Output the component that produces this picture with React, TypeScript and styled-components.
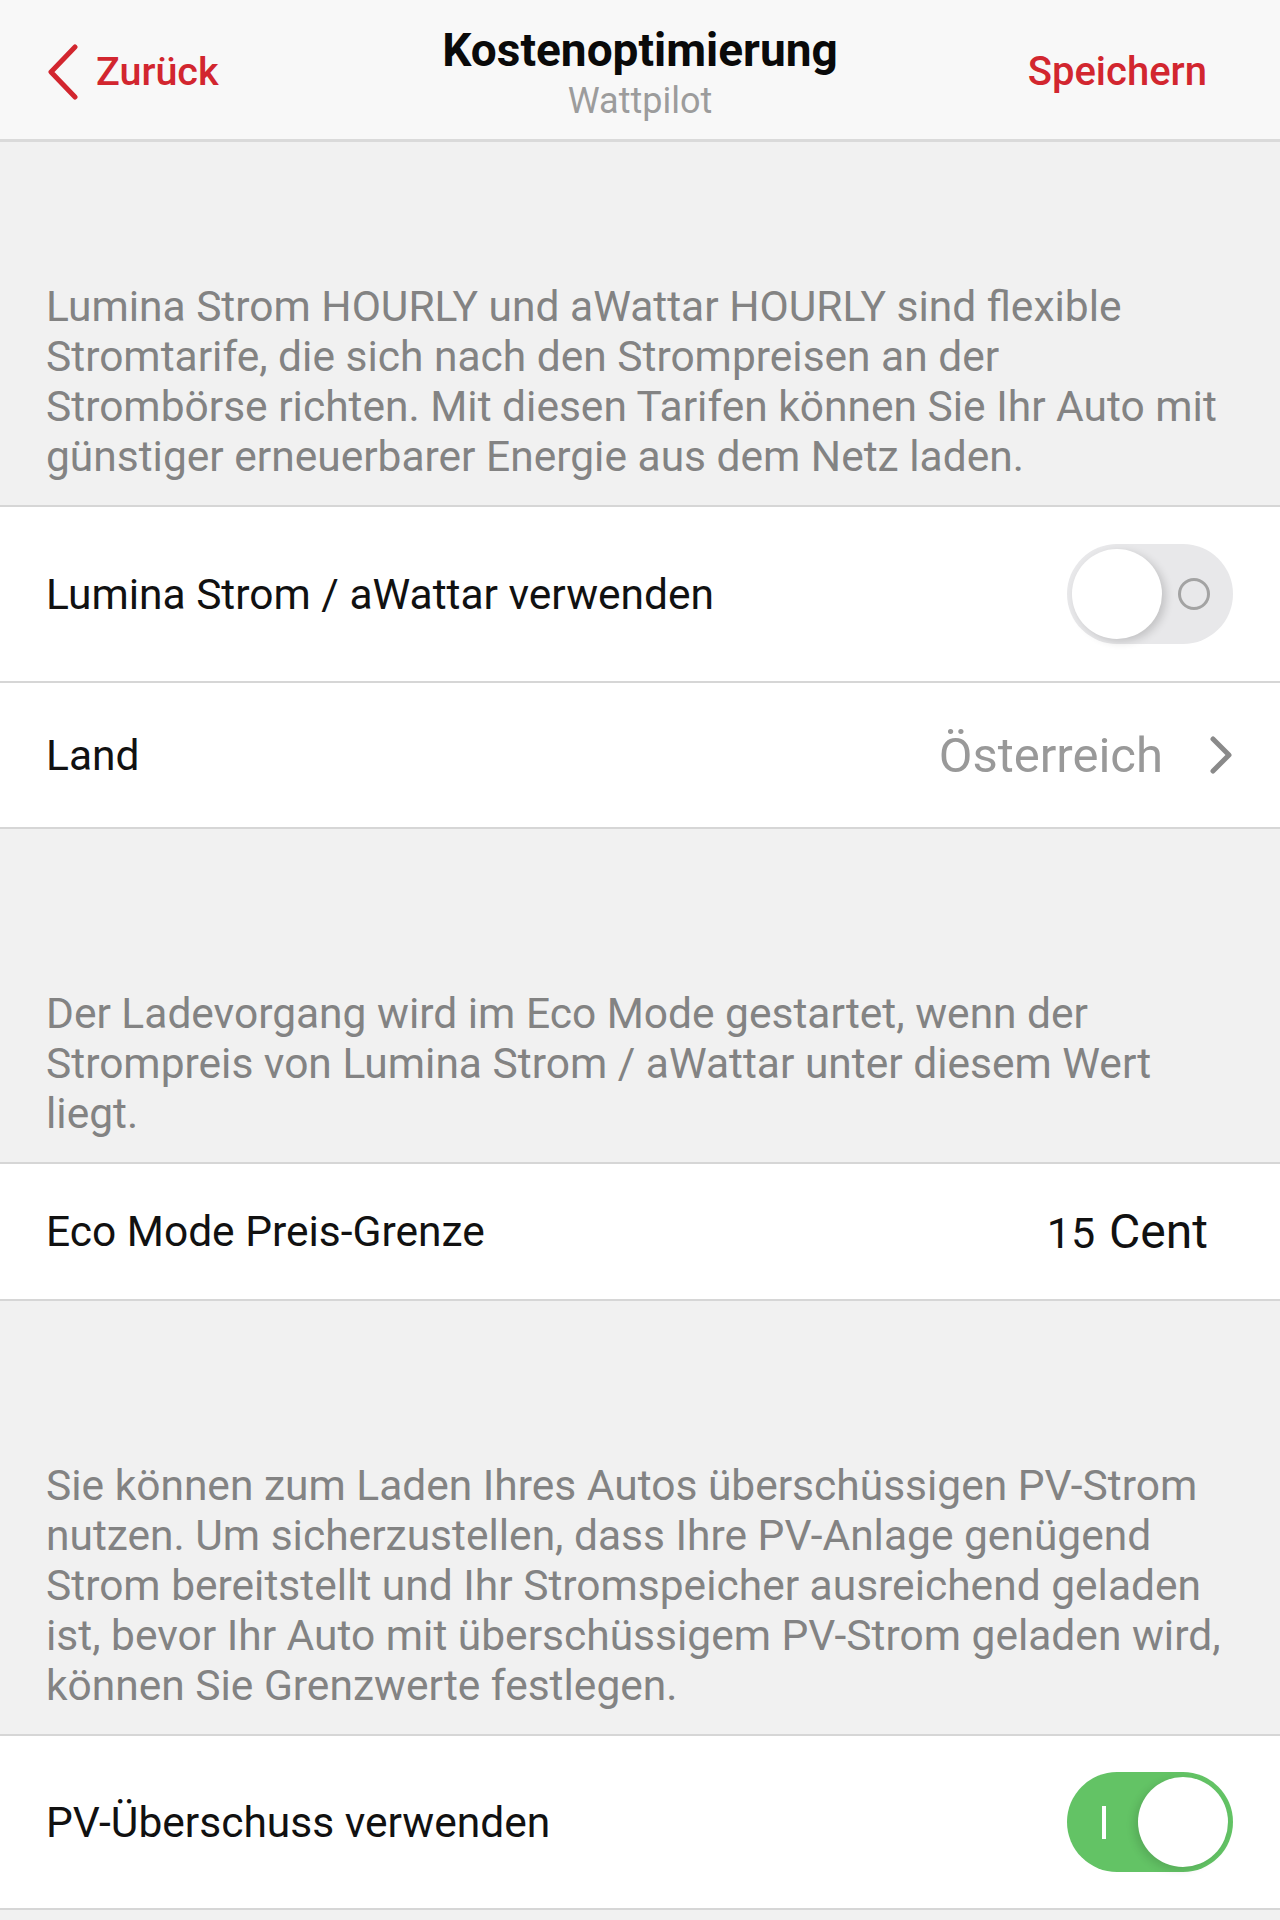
import React from "react";
import styled, { createGlobalStyle } from "styled-components";

const GlobalStyle = createGlobalStyle`
  html, body {
    margin: 0;
    padding: 0;
    background: #f1f1f1;
    font-family: Roboto, "Noto Sans", "Liberation Sans", sans-serif;
    -webkit-font-smoothing: antialiased;
  }
  * { box-sizing: border-box; }
`;

const Page = styled.div`
  width: 1280px;
  min-height: 1920px;
  background: #f1f1f1;
  display: flex;
  flex-direction: column;
`;

const Header = styled.header`
  height: 142px;
  background: #f8f8f8;
  border-bottom: 3px solid #dadada;
  display: grid;
  grid-template-columns: 1fr auto 1fr;
  align-items: center;
  padding: 0 47px;
`;

const BackButton = styled.button`
  justify-self: start;
  display: flex;
  align-items: center;
  gap: 17px;
  border: none;
  background: transparent;
  padding: 0;
  margin-top: 4px;
  color: #d2262f;
  font-family: Roboto, sans-serif;
  font-size: 39.5px;
  font-weight: 500;
  cursor: pointer;
`;

const SaveButton = styled(BackButton)`
  justify-self: end;
  margin-right: 26px;
  font-size: 40px;
`;

const TitleBlock = styled.div`
  display: flex;
  flex-direction: column;
  align-items: center;
  align-self: start;
  padding-top: 25px;
`;

const Title = styled.div`
  font-size: 46px;
  line-height: 50px;
  font-weight: 700;
  color: #0a0a0a;
`;

const Subtitle = styled.div`
  font-size: 36px;
  line-height: 42px;
  margin-top: 5px;
  color: #9c9c9c;
`;

const Description = styled.p<{ $top: number }>`
  margin: 0;
  padding: ${(p) => p.$top}px 47px 23px 46px;
  font-size: 42.5px;
  line-height: 50px;
  color: #838383;
  white-space: nowrap;
`;

const Row = styled.div<{ $h: number; $bottom?: boolean }>`
  height: ${(p) => p.$h}px;
  background: #ffffff;
  border-top: 2px solid #d6d6d6;
  border-bottom: ${(p) => (p.$bottom ? "2px solid #d6d6d6" : "none")};
  display: flex;
  align-items: center;
  justify-content: space-between;
  padding: 0 47px 0 46px;
`;

const Label = styled.span`
  font-size: 42.5px;
  color: #111111;
`;

const ValueGroup = styled.div<{ $gap: number }>`
  display: flex;
  align-items: center;
  gap: ${(p) => p.$gap}px;
`;

const CountryValue = styled.span`
  font-size: 49px;
  color: #999999;
`;

const PriceNumber = styled.span`
  font-size: 43px;
  color: #111111;
`;

const PriceUnit = styled.span`
  font-size: 48px;
  color: #111111;
`;

const BaselineGroup = styled.div`
  display: flex;
  align-items: baseline;
  gap: 14px;
  margin-right: 25px;
`;

const Track = styled.div<{ $on: boolean }>`
  position: relative;
  width: 166px;
  height: 100px;
  border-radius: 50px;
  background: ${(p) => (p.$on ? "#63c365" : "#e8e8ea")};
  flex-shrink: 0;
`;

const Knob = styled.div<{ $on: boolean }>`
  position: absolute;
  top: 5px;
  left: ${(p) => (p.$on ? "71px" : "5px")};
  width: 90px;
  height: 90px;
  border-radius: 50%;
  background: #ffffff;
  box-shadow: ${(p) =>
    p.$on
      ? "-4px 3px 8px rgba(0,0,0,0.12)"
      : "4px 3px 9px rgba(0,0,0,0.16)"};
`;

const OffRing = styled.div`
  position: absolute;
  right: 23px;
  top: 34px;
  width: 32px;
  height: 32px;
  border-radius: 50%;
  border: 3px solid #a3a3a3;
`;

const OnBar = styled.div`
  position: absolute;
  left: 35px;
  top: 34px;
  width: 4px;
  height: 33px;
  background: #ffffff;
`;

const Toggle: React.FC<{ on: boolean }> = ({ on }) => (
  <Track $on={on}>
    {on ? <OnBar /> : <OffRing />}
    <Knob $on={on} />
  </Track>
);

const BackChevron = () => (
  <svg width="32" height="56" viewBox="0 0 32 56" fill="none">
    <path
      d="M28 3 L4 28 L28 53"
      stroke="#d2262f"
      strokeWidth="5"
      strokeLinecap="round"
      strokeLinejoin="round"
    />
  </svg>
);

const RightChevron = () => (
  <svg width="24" height="38" viewBox="0 0 24 38" fill="none">
    <path
      d="M4 3 L20 19 L4 35"
      stroke="#8a8a8a"
      strokeWidth="5"
      strokeLinecap="round"
      strokeLinejoin="round"
    />
  </svg>
);

export default function App() {
  return (
    <>
      <GlobalStyle />
      <Page>
        <Header>
          <BackButton>
            <BackChevron />
            Zurück
          </BackButton>
          <TitleBlock>
            <Title>Kostenoptimierung</Title>
            <Subtitle>Wattpilot</Subtitle>
          </TitleBlock>
          <SaveButton>Speichern</SaveButton>
        </Header>

        <Description $top={140}>
          Lumina Strom HOURLY und aWattar HOURLY sind flexible
          <br />
          Stromtarife, die sich nach den Strompreisen an der
          <br />
          Strombörse richten. Mit diesen Tarifen können Sie Ihr Auto mit
          <br />
          günstiger erneuerbarer Energie aus dem Netz laden.
        </Description>

        <Row $h={176}>
          <Label>Lumina Strom / aWattar verwenden</Label>
          <Toggle on={false} />
        </Row>
        <Row $h={148} $bottom>
          <Label>Land</Label>
          <ValueGroup $gap={46}>
            <CountryValue>Österreich</CountryValue>
            <RightChevron />
          </ValueGroup>
        </Row>

        <Description $top={160}>
          Der Ladevorgang wird im Eco Mode gestartet, wenn der
          <br />
          Strompreis von Lumina Strom / aWattar unter diesem Wert
          <br />
          liegt.
        </Description>

        <Row $h={139} $bottom>
          <Label>Eco Mode Preis-Grenze</Label>
          <BaselineGroup>
            <PriceNumber>15</PriceNumber>
            <PriceUnit>Cent</PriceUnit>
          </BaselineGroup>
        </Row>

        <Description $top={160}>
          Sie können zum Laden Ihres Autos überschüssigen PV-Strom
          <br />
          nutzen. Um sicherzustellen, dass Ihre PV-Anlage genügend
          <br />
          Strom bereitstellt und Ihr Stromspeicher ausreichend geladen
          <br />
          ist, bevor Ihr Auto mit überschüssigem PV-Strom geladen wird,
          <br />
          können Sie Grenzwerte festlegen.
        </Description>

        <Row $h={176} $bottom>
          <Label>PV-Überschuss verwenden</Label>
          <Toggle on={true} />
        </Row>
      </Page>
    </>
  );
}
